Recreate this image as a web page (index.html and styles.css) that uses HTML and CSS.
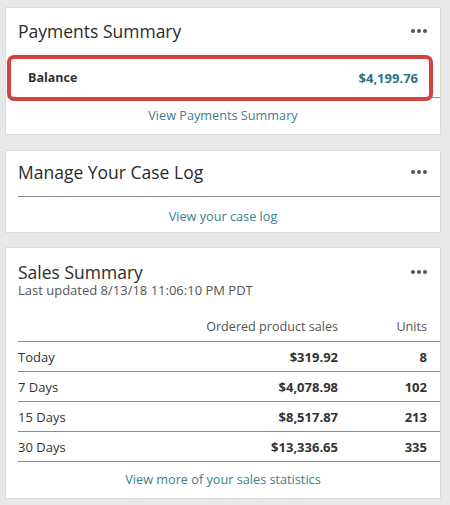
FILE: index.html
```html
<!DOCTYPE html>
<html>
<head>
<meta charset="utf-8">
<link rel="stylesheet" href="styles.css">
</head>
<body>
<div class="page">
  <section class="card card-payments">
    <div class="card-head">
      <h2 class="card-title">Payments Summary</h2>
      <span class="more"><i></i><i></i><i></i></span>
    </div>
    <div class="balance-row">
      <span class="balance-label">Balance</span>
      <span class="balance-value">$4,199.76</span>
      <span class="highlight"></span>
    </div>
    <a class="card-link">View Payments Summary</a>
  </section>

  <section class="card card-cases">
    <div class="card-head">
      <h2 class="card-title">Manage Your Case Log</h2>
      <span class="more"><i></i><i></i><i></i></span>
    </div>
    <div class="divider"></div>
    <a class="card-link">View your case log</a>
  </section>

  <section class="card card-sales">
    <div class="card-head">
      <h2 class="card-title">Sales Summary</h2>
      <span class="more"><i></i><i></i><i></i></span>
    </div>
    <div class="updated">Last updated 8/13/18 11:06:10 PM PDT</div>
    <div class="sales-table">
      <div class="srow shead">
        <span></span>
        <span class="num">Ordered product sales</span>
        <span class="num">Units</span>
      </div>
      <div class="srow">
        <span>Today</span>
        <span class="num b">$319.92</span>
        <span class="num b">8</span>
      </div>
      <div class="srow">
        <span>7 Days</span>
        <span class="num b">$4,078.98</span>
        <span class="num b">102</span>
      </div>
      <div class="srow">
        <span>15 Days</span>
        <span class="num b">$8,517.87</span>
        <span class="num b">213</span>
      </div>
      <div class="srow">
        <span>30 Days</span>
        <span class="num b">$13,336.65</span>
        <span class="num b">335</span>
      </div>
    </div>
    <a class="card-link">View more of your sales statistics</a>
  </section>
</div>
</body>
</html>
```

FILE: styles.css
```css
* { box-sizing: border-box; }
html, body { margin: 0; padding: 0; }
body {
  background: #e8e8e8;
  font-family: "Open Sans", "Noto Sans", sans-serif;
  color: #333;
  width: 450px;
  height: 505px;
  overflow: hidden;
}
.page {
  padding: 7px 0 0 5px;
  width: 441px;
  display: flex;
  flex-direction: column;
}
.card {
  background: #fff;
  border: 1px solid #dcdcdc;
  padding-left: 12px;
  display: flex;
  flex-direction: column;
}
.card-payments { padding-top: 11px; padding-bottom: 9px; margin-bottom: 15px; }
.card-cases { padding-top: 9px; padding-bottom: 6px; margin-bottom: 14px; }
.card-sales { padding-top: 14px; padding-bottom: 9px; }

.card-head {
  display: flex;
  align-items: center;
  justify-content: space-between;
  padding-right: 13px;
}
.card-title {
  margin: 0;
  font-size: 17.5px;
  font-weight: normal;
  line-height: 24px;
  color: #2b2b2b;
}
.card-sales .card-title { line-height: 20px; }
.more { display: flex; gap: 2px; }
.more i {
  display: block;
  width: 4px;
  height: 4px;
  border-radius: 50%;
  background: #555;
}

.balance-row {
  position: relative;
  margin-top: 15px;
  height: 40px;
  border-bottom: 1px solid #8c8c8c;
  display: flex;
  align-items: center;
  justify-content: space-between;
  padding: 0 22px 0 10px;
  font-size: 13px;
  font-weight: bold;
}
.balance-label { color: #333; font-size: 12.5px; }
.balance-value { color: #2b7484; }
.highlight {
  position: absolute;
  left: -11px;
  top: -3px;
  width: 426px;
  height: 46px;
  border: 4px solid #d4433d;
  border-radius: 7px;
}

.card-link {
  display: block;
  text-align: center;
  font-size: 12.7px;
  line-height: 20px;
  color: #3a8090;
  text-decoration: none;
  margin-top: 7px;
  padding-right: 12px;
}
.divider {
  margin-top: 12px;
  border-top: 1px solid #8c8c8c;
}
.card-cases .card-link { margin-top: 9px; }

.updated {
  font-size: 13px;
  line-height: 16px;
  color: #555;
  margin-bottom: 14px;
}
.sales-table { display: flex; flex-direction: column; }
.srow {
  display: grid;
  grid-template-columns: 1fr 150px 102px;
  align-items: center;
  height: 30px;
  border-bottom: 1px solid #8c8c8c;
  font-size: 13px;
  color: #333;
}
.shead { color: #555; font-size: 12.6px; }
.num { text-align: right; }
.srow .num:last-child { padding-right: 13px; }
.b { font-weight: bold; }
```
